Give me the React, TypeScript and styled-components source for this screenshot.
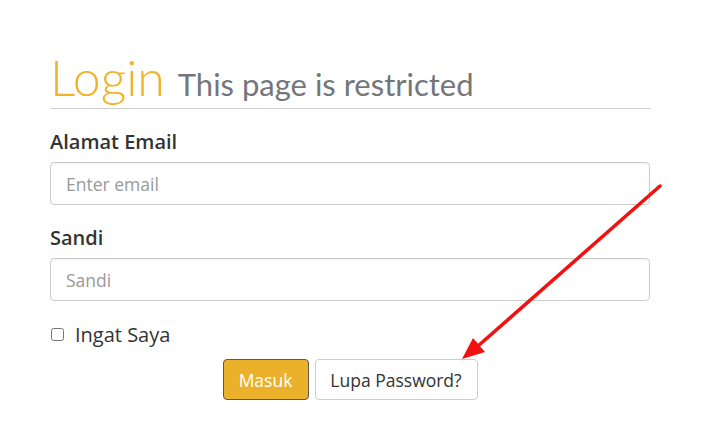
import React from "react";
import styled, { createGlobalStyle } from "styled-components";

const GlobalStyle = createGlobalStyle`
  html, body {
    margin: 0;
    padding: 0;
    background: #fff;
  }
  body {
    font-family: "Open Sans", "Liberation Sans", sans-serif;
    color: #333;
  }
`;

export default function App() {
  return (
    <>
      <GlobalStyle />
      <Page>
        <Container>
          <Heading>
            <Title>Login</Title>
            <Subtitle>This page is restricted</Subtitle>
          </Heading>
          <Form>
            <Field>
              <Label>Alamat Email</Label>
              <Input type="email" placeholder="Enter email" />
            </Field>
            <Field>
              <Label>Sandi</Label>
              <Input type="password" placeholder="Sandi" />
            </Field>
            <CheckRow>
              <CheckBox type="checkbox" />
              <CheckLabel>Ingat Saya</CheckLabel>
            </CheckRow>
            <Actions>
              <PrimaryButton type="button">Masuk</PrimaryButton>
              <DefaultButton type="button">Lupa Password?</DefaultButton>
            </Actions>
          </Form>
        </Container>
        <Arrow width="701" height="437" viewBox="0 0 701 437">
          <line
            x1="660"
            y1="186"
            x2="478"
            y2="346"
            stroke="#f21010"
            strokeWidth="3.5"
            strokeLinecap="round"
          />
          <polygon points="462,359 473,338 485,352" fill="#f21010" />
        </Arrow>
      </Page>
    </>
  );
}

const Page = styled.div`
  position: relative;
  width: 701px;
  height: 437px;
  overflow: hidden;
  padding: 50px 0 0 50px;
  box-sizing: border-box;
`;

const Container = styled.div`
  width: 600px;
`;

const Heading = styled.div`
  display: flex;
  align-items: baseline;
  gap: 13px;
  padding-bottom: 4px;
  border-bottom: 1px solid #cfcfcf;
`;

const Title = styled.span`
  font-family: "Lato", "Open Sans", sans-serif;
  font-weight: 300;
  font-size: 50px;
  line-height: 54px;
  color: #f2b22a;
`;

const Subtitle = styled.span`
  font-family: "Lato", "Open Sans", sans-serif;
  font-weight: 400;
  font-size: 31px;
  color: #74767a;
`;

const Form = styled.div`
  display: flex;
  flex-direction: column;
  padding-top: 20px;
`;

const Field = styled.div`
  display: flex;
  flex-direction: column;
  gap: 7px;
  margin-bottom: 20px;
`;

const Label = styled.label`
  font-size: 20px;
  font-weight: 600;
  line-height: 26px;
  color: #333;
`;

const Input = styled.input`
  box-sizing: border-box;
  width: 100%;
  height: 43px;
  padding: 0 15px;
  border: 1px solid #ccc;
  border-radius: 4px;
  font-family: "Open Sans", "Liberation Sans", sans-serif;
  font-size: 17.5px;
  color: #555;
  box-shadow: inset 0 1px 1px rgba(0, 0, 0, 0.05);
  outline: none;

  &::placeholder {
    color: #999;
  }
`;

const CheckRow = styled.label`
  display: flex;
  align-items: center;
  gap: 11px;
  margin-top: 0;
  height: 26px;
`;

const CheckBox = styled.input`
  width: 13px;
  height: 13px;
  margin: 0 0 0 1px;
`;

const CheckLabel = styled.span`
  font-size: 20px;
  color: #333;
`;

const Actions = styled.div`
  display: flex;
  justify-content: center;
  gap: 6px;
  margin-top: 12px;
`;

const ButtonBase = styled.button`
  box-sizing: border-box;
  height: 41px;
  padding: 0 12px;
  border-radius: 4px;
  font-family: "Open Sans", "Liberation Sans", sans-serif;
  font-size: 17.5px;
  cursor: pointer;
`;

const PrimaryButton = styled(ButtonBase)`
  width: 86px;
  background: #ebb12b;
  border: 1px solid #5e5a48;
  color: #fff;
`;

const DefaultButton = styled(ButtonBase)`
  width: 163px;
  background: #fff;
  border: 1px solid #ccc;
  color: #333;
`;

const Arrow = styled.svg`
  position: absolute;
  left: 0;
  top: 0;
  pointer-events: none;
`;
